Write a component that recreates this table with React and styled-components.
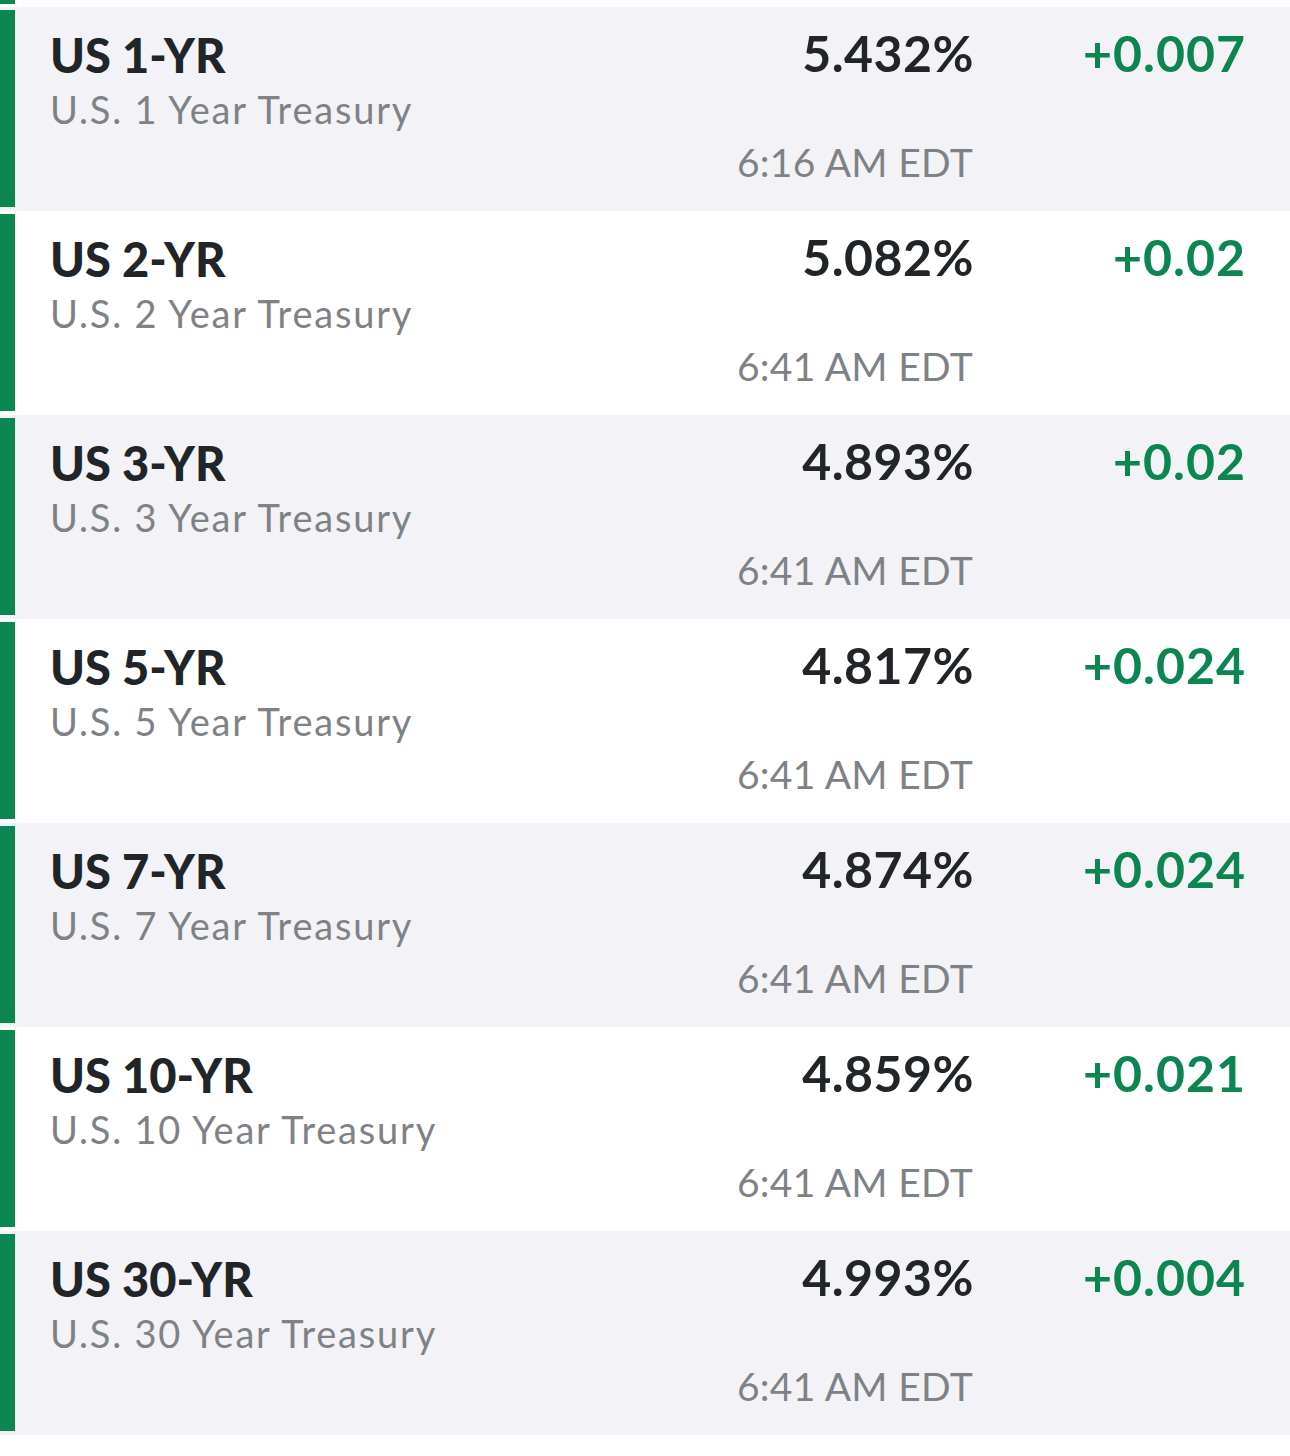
import React from 'react';
import styled, { createGlobalStyle } from 'styled-components';

const bonds = [
  { symbol: 'US 1-YR', name: 'U.S. 1 Year Treasury', yld: '5.432%', change: '+0.007', time: '6:16 AM EDT' },
  { symbol: 'US 2-YR', name: 'U.S. 2 Year Treasury', yld: '5.082%', change: '+0.02', time: '6:41 AM EDT' },
  { symbol: 'US 3-YR', name: 'U.S. 3 Year Treasury', yld: '4.893%', change: '+0.02', time: '6:41 AM EDT' },
  { symbol: 'US 5-YR', name: 'U.S. 5 Year Treasury', yld: '4.817%', change: '+0.024', time: '6:41 AM EDT' },
  { symbol: 'US 7-YR', name: 'U.S. 7 Year Treasury', yld: '4.874%', change: '+0.024', time: '6:41 AM EDT' },
  { symbol: 'US 10-YR', name: 'U.S. 10 Year Treasury', yld: '4.859%', change: '+0.021', time: '6:41 AM EDT' },
  { symbol: 'US 30-YR', name: 'U.S. 30 Year Treasury', yld: '4.993%', change: '+0.004', time: '6:41 AM EDT' },
];

const App = () => {
  return (
    <>
      <GlobalStyle />
      <List>
        <Sliver>
          <Bar $cut />
        </Sliver>
        {bonds.map((bond, index) => (
          <Row key={bond.symbol} $shaded={index % 2 === 0}>
            <Bar />
            <Content>
              <Info>
                <Symbol>{bond.symbol}</Symbol>
                <Name>{bond.name}</Name>
              </Info>
              <Quote>
                <Yield>{bond.yld}</Yield>
                <Time>{bond.time}</Time>
              </Quote>
              <Change>{bond.change}</Change>
            </Content>
          </Row>
        ))}
      </List>
    </>
  );
};

const GlobalStyle = createGlobalStyle`
  body {
    margin: 0;
    background: #ffffff;
    font-family: 'Lato', 'Liberation Sans', sans-serif;
  }
`;

const List = styled.div`
  width: 1290px;
`;

const Sliver = styled.div`
  height: 7px;
  display: flex;
  align-items: flex-start;
`;

const Row = styled.div`
  display: flex;
  height: 204px;
  background: ${(p) => (p.$shaded ? '#f3f3f7' : '#ffffff')};
`;

const Bar = styled.div`
  width: 15px;
  flex-shrink: 0;
  background: #0b8651;
  margin: ${(p) => (p.$cut ? '0' : '3px 0 4px')};
  height: ${(p) => (p.$cut ? '4px' : 'auto')};
`;

const Content = styled.div`
  flex: 1;
  display: grid;
  grid-template-columns: 1fr auto 272px;
  padding: 0 46px 0 35px;
`;

const Info = styled.div`
  display: flex;
  flex-direction: column;
`;

const Symbol = styled.div`
  font-size: 47px;
  font-weight: 900;
  color: #222528;
  line-height: 52px;
  margin-top: 22px;
`;

const Name = styled.div`
  font-size: 38px;
  color: #7f8285;
  line-height: 52px;
  letter-spacing: 1.8px;
  margin-top: 2px;
`;

const Quote = styled.div`
  display: flex;
  flex-direction: column;
  align-items: flex-end;
`;

const Yield = styled.div`
  font-size: 50px;
  font-weight: 700;
  color: #222528;
  line-height: 52px;
  margin-top: 20px;
  margin-right: -2px;
  letter-spacing: 0.5px;
`;

const Time = styled.div`
  font-size: 39px;
  color: #7f8285;
  line-height: 52px;
  margin-top: 57px;
  letter-spacing: 0.3px;
  margin-right: -1px;
`;

const Change = styled.div`
  font-size: 50px;
  font-weight: 700;
  color: #0b8651;
  line-height: 52px;
  margin-top: 20px;
  margin-right: -2px;
  text-align: right;
  letter-spacing: 1px;
`;

export default App;
